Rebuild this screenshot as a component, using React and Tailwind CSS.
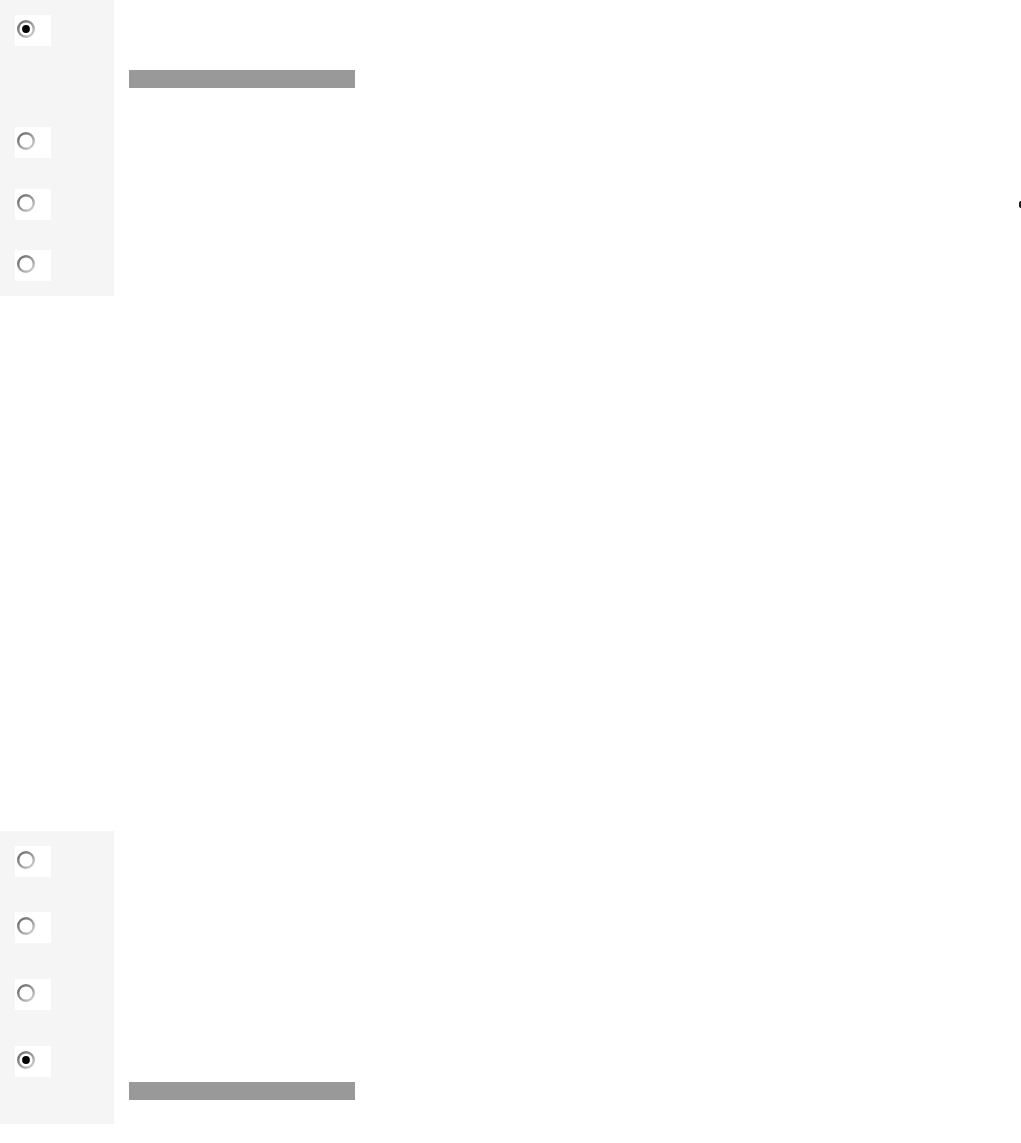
import React from 'react';

function Radio({ checked }) {
  const id = checked ? 'ringOn' : 'ringOff';
  return (
    <svg width="18" height="18" viewBox="0 0 18 18" className="block">
      <defs>
        <linearGradient id={id} x1="0" y1="0" x2="1" y2="1">
          <stop offset="0%" stopColor="#6a6a6a" />
          <stop offset="50%" stopColor="#959595" />
          <stop offset="100%" stopColor="#d8d8d8" />
        </linearGradient>
      </defs>
      <circle cx="9" cy="9" r="7.8" fill="#fff" stroke={`url(#${id})`} strokeWidth="2.4" />
      {checked && <circle cx="9" cy="9" r="3.9" fill="#000" />}
    </svg>
  );
}

function RadioBox({ checked }) {
  return (
    <div className="w-[36px] h-[31px] bg-white pl-[2px] pt-[5px]">
      <Radio checked={checked} />
    </div>
  );
}

function Row({ height, checked, barTop, children }) {
  return (
    <div className="flex" style={{ height }}>
      <div className="w-[114px] shrink-0 bg-[#f5f5f5] pl-[15px] pt-[15px]">
        <RadioBox checked={checked} />
      </div>
      <div className="flex-1 pl-[15px]">
        {checked && (
          <div className="w-[226px] h-[18px] bg-[#999]" style={{ marginTop: barTop }} />
        )}
        {children}
      </div>
    </div>
  );
}

export default function App() {
  return (
    <div className="w-[1021px] bg-white font-['Liberation_Sans',Arial,sans-serif]">
      <div className="flex flex-col">
        <Row height={112} checked barTop={70} />
        <Row height={62} />
        <div className="flex h-[61px]">
          <div className="w-[114px] shrink-0 bg-[#f5f5f5] pl-[15px] pt-[15px]">
            <RadioBox />
          </div>
          <div className="flex-1 flex justify-end pt-[27px]">
            <span className="w-[2px] h-[7px] bg-[#1a1a1a] rounded-l-[2px]" />
          </div>
        </div>
        <Row height={61} />
      </div>

      <div className="h-[535px]" />

      <div className="flex flex-col">
        <Row height={66} />
        <Row height={67} />
        <Row height={67} />
        <Row height={93} checked barTop={51} />
      </div>
    </div>
  );
}
